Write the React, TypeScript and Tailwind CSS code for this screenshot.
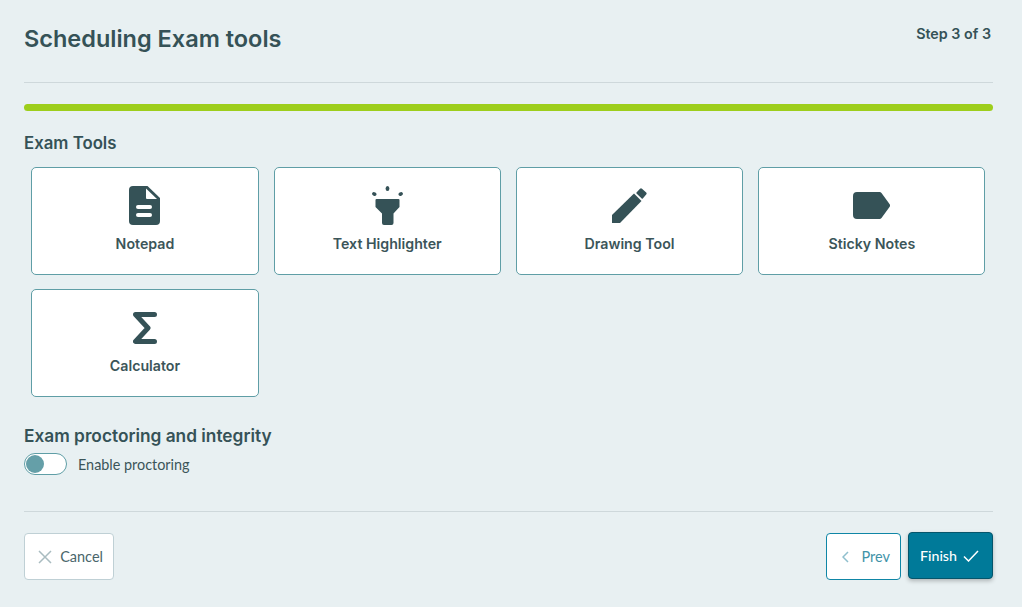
import { ReactNode } from "react";

const POPPINS = "font-['Inter','Noto_Sans',sans-serif]";

const TOOLS: { label: string; icon: ReactNode }[] = [
  {
    label: "Notepad",
    icon: (
      <svg width="31" height="39" viewBox="0 0 31 39" fill="#355257">
        <path d="M4 0H18.500L31 12V35a4 4 0 0 1-4 4H4a4 4 0 0 1-4-4V4a4 4 0 0 1 4-4z" />
        <path d="M17 2.500 28 13H18a1 1 0 0 1-1-1z" fill="#fff" />
        <rect x="7" y="19" width="16" height="4" rx="2" fill="#fff" />
        <rect x="7" y="27" width="16" height="4" rx="2" fill="#fff" />
      </svg>
    ),
  },
  {
    label: "Text Highlighter",
    icon: (
      <svg width="31" height="39" viewBox="0 0 31 39" fill="#355257">
        <path d="M4.500 13H26.500a1 1 0 0 1 1 1V21L21.500 27.500V37a2 2 0 0 1-2 2H12a2 2 0 0 1-2-2V27.500L3.500 21V14a1 1 0 0 1 1-1z" />
        <ellipse cx="15.500" cy="2.600" rx="1.900" ry="2.500" />
        <ellipse cx="2.300" cy="8" rx="2.300" ry="1.800" transform="rotate(35 2.300 8)" />
        <ellipse cx="28.700" cy="8" rx="2.300" ry="1.800" transform="rotate(-35 28.700 8)" />
      </svg>
    ),
  },
  {
    label: "Drawing Tool",
    icon: (
      <svg width="35" height="35" viewBox="0 0 35 35" fill="#355257">
        <path d="M0 27 22 5.500 29.500 13 8 35H0z" />
        <path d="M24.500 4.600 28 0.800a1.500 1.500 0 0 1 2 0l4.200 3.800a1.500 1.500 0 0 1 0 2L30.800 10.500a0.800 0.800 0 0 1-1.100 0l-5.200-5a0.700 0.700 0 0 1 0-0.900z" />
      </svg>
    ),
  },
  {
    label: "Sticky Notes",
    icon: (
      <svg width="37" height="27" viewBox="0 0 37 27" fill="#355257">
        <path d="M4 0h22.500a2.500 2.500 0 0 1 2 1l8 11a2.500 2.500 0 0 1 0 3l-8 11a2.500 2.500 0 0 1-2 1H4a4 4 0 0 1-4-4V4a4 4 0 0 1 4-4z" />
      </svg>
    ),
  },
  {
    label: "Calculator",
    icon: (
      <svg width="24" height="32" viewBox="0 0 24 32" fill="none" stroke="#355257" strokeWidth="5" strokeLinecap="round" strokeLinejoin="round">
        <path d="M21.500 2.500H2.500L15 16 2.500 29.500h19" />
      </svg>
    ),
  },
];

function ToolCard({ label, icon }: { label: string; icon: ReactNode }) {
  return (
    <div className="flex h-[108px] flex-col items-center rounded-[5px] border border-[#5f9ea6] bg-white pt-[18px]">
      <div className="flex h-[39px] items-center justify-center">{icon}</div>
      <div className={`${POPPINS} mt-[10px] text-[14.200px] leading-[18px] font-semibold text-[#3b5559]`}>{label}</div>
    </div>
  );
}

export default function App() {
  return (
    <div className="h-[607px] w-[1022px] overflow-hidden bg-[#e8f0f2] pl-6 pr-[29px] text-[#355257]">
      {/* Header */}
      <div className="flex h-[83px] items-start justify-between border-b border-[#ced8db] pt-[24px]">
        <h1 className={`${POPPINS} text-[23.500px] leading-[30px] font-semibold text-[#355257]`}>Scheduling Exam tools</h1>
        <span className={`${POPPINS} mr-[2px] mt-[-4px] text-[14.300px] leading-[28px] font-semibold`}>Step 3 of 3</span>
      </div>

      {/* Progress */}
      <div className="mt-[21px] h-[7px] rounded-full bg-[#9dce1c]" />

      <h2 className={`${POPPINS} mt-[21px] text-[16.800px] leading-[22px] font-semibold`}>Exam Tools</h2>

      <div className="mt-[13px] grid grid-cols-4 gap-x-[15.200px] gap-y-[14px] pl-[7.400px] pr-[7.600px]">
        {TOOLS.map((t) => (
          <ToolCard key={t.label} label={t.label} icon={t.icon} />
        ))}
      </div>

      {/* Proctoring */}
      <h2 className={`${POPPINS} mt-[28px] text-[17.300px] leading-[22px] font-semibold`}>Exam proctoring and integrity</h2>
      <div className="mt-[6px] flex h-[22px] items-start">
        <div className="flex h-[22px] w-[43px] items-center rounded-full border border-[#5f9ea6] bg-white px-px">
          <div className="h-[18px] w-[18px] rounded-full bg-[#659fa8]" />
        </div>
        <span className="ml-[11px] font-['Lato',sans-serif] text-[14.400px] leading-[24px] text-[#3b5559]">Enable proctoring</span>
      </div>

      {/* Footer */}
      <div className="mt-[36px] flex items-start justify-between border-t border-[#ced8db] pt-[21px]">
        <button className="flex h-[47px] w-[90px] items-center justify-end gap-[8px] rounded-[4px] border border-[#bfd0d5] bg-white pr-[10px] font-['Lato',sans-serif] text-[14.500px] text-[#4a666b]">
          <svg width="14" height="14" viewBox="0 0 14 14" fill="none" stroke="#a9bcc0" strokeWidth="1.500">
            <path d="M1 1l12 12M13 1 1 13" />
          </svg>
          Cancel
        </button>
        <div className="flex gap-[7px]">
          <button className="flex h-[47px] w-[75px] items-center justify-end gap-[12px] rounded-[4px] border border-[#0f86a6] bg-white pr-[10px] font-['Lato',sans-serif] text-[14.500px] text-[#3f93a8]">
            <svg width="7" height="12" viewBox="0 0 7 12" fill="none" stroke="#8fbfcd" strokeWidth="1.500">
              <path d="M6 1 1 6l5 5" />
            </svg>
            Prev
          </button>
          <button className="-mt-px flex h-[47px] w-[85px] items-center justify-center gap-[6px] rounded-[4px] border border-[#05556b] bg-[#007a99] pr-[2px] font-['Lato',sans-serif] text-[14.200px] font-medium text-white shadow-[0_2px_4px_rgba(0,0,0,0.25)]">
            Finish
            <svg width="16" height="12" viewBox="0 0 16 12" fill="none" stroke="#ffffff" strokeWidth="1.500">
              <path d="M1 6.500 5.500 11 15 1" />
            </svg>
          </button>
        </div>
      </div>
    </div>
  );
}
